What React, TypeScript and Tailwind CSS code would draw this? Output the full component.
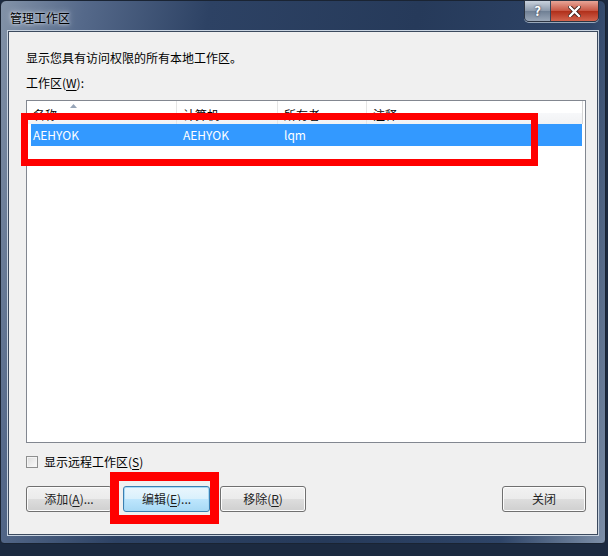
import { Fragment } from "react";

const font = { fontFamily: '"Noto Sans CJK SC", "Open Sans", sans-serif' };

const Btn = ({ label, focus, w }: { label: React.ReactNode; focus?: boolean; w: string }) => (
  <button
    className={`${w} h-[26px] rounded-[3px] border text-[12px] text-[#1e1e1e] leading-none ${
      focus
        ? "border-[#3c7fb1] shadow-[inset_0_0_0_1px_#a7d9f5] bg-[linear-gradient(#eaf6fd_0%,#d9f0fc_50%,#bee6fd_51%,#a7d9f5_100%)]"
        : "border-[#707070] shadow-[inset_0_0_0_1px_#fcfcfc] bg-[linear-gradient(#f2f2f2_0%,#ebebeb_50%,#dddddd_51%,#cfcfcf_100%)]"
    }`}
  >
    {label}
  </button>
);

const u = (c: string) => <span className="underline underline-offset-2">{c}</span>;

const columns = [
  { name: "名称", w: "w-[150px]" },
  { name: "计算机", w: "w-[101px]" },
  { name: "所有者", w: "w-[89px]" },
  { name: "注释", w: "flex-1" },
];

export default function App() {
  return (
    <div className="w-[608px] h-[556px] bg-[#1c2a40] overflow-hidden" style={font}>
      <div className="relative w-[606px] h-[544px] rounded-t-[6px] rounded-b-[4px] border border-[#1a2433] bg-[linear-gradient(100deg,#8393a8_0%,#55698a_12%,#2d4264_30%,#263a5a_60%,#2e4467_85%,#7d8fa8_100%)] px-[7px] pt-[30px] pb-[8px] flex flex-col">
        {/* title */}
        <div className="absolute left-[9px] top-[8px] text-[12px] text-black [text-shadow:0_0_6px_#dfe6ee,0_0_3px_#dfe6ee]">
          管理工作区
        </div>
        <div className="absolute right-[6px] top-[-1px] flex h-[22px] border border-[#2b3442] rounded-b-[5px] overflow-hidden shadow-[0_1px_0_#9aa8ba]">
          <div className="w-[26px] flex items-center justify-center bg-[linear-gradient(#c9d2dd,#8a98aa_50%,#6f7f94_51%,#9aa7b8)] text-white text-[13px] font-bold border-r border-[#39465a] [text-shadow:0_0_2px_#223]">
            ?
          </div>
          <div className="w-[47px] flex items-center justify-center bg-[linear-gradient(#e8a597,#c75441_50%,#b02f1a_51%,#d2644e)] text-white">
            <svg width="13" height="11" viewBox="0 0 13 11">
              <path d="M2 1 L11 10 M11 1 L2 10" stroke="#3b1a14" strokeWidth="4" strokeLinecap="square" />
              <path d="M2 1 L11 10 M11 1 L2 10" stroke="#fff" strokeWidth="2.4" strokeLinecap="square" />
            </svg>
          </div>
        </div>

        {/* client */}
        <div className="flex-1 bg-[#f0f0f0] border border-[#3c4a5e] shadow-[0_0_0_1px_#c8d3e0] flex flex-col pl-[17px] pr-[11px]">
          <div className="text-[12px] text-black mt-[18px] leading-[16px]">显示您具有访问权限的所有本地工作区。</div>
          <div className="text-[12px] text-black mt-[9px] leading-[16px]">工作区({u("W")}):</div>

          <div className="mt-[9px] h-[343px] border border-[#828790] bg-white flex flex-col">
            <div className="flex h-[23px] mr-[2px] text-[12px] text-black">
              {columns.map((c, i) => (
                <div
                  key={c.name}
                  className={`${c.w} relative flex items-center pt-[4px] pl-[6px] border-r border-[#e5e5e5] bg-[linear-gradient(#ffffff_0%,#ffffff_50%,#f7f8fa_51%,#f1f2f4_100%)] ${
                    i === 3 ? "border-r-[#d5d5d5]" : ""
                  }`}
                >
                  {c.name}
                  {i === 0 && (
                    <svg className="absolute left-[43px] top-[3px]" width="7" height="4" viewBox="0 0 7 4">
                      <path d="M0 4 L3.5 0 L7 4 Z" fill="#97a5b8" />
                    </svg>
                  )}
                </div>
              ))}
            </div>
            <div className="flex h-[22px] ml-[4px] mr-[3px] bg-[#3399ff] text-white text-[12px] items-center">
              {["AEHYOK", "AEHYOK", "lqm", ""].map((t, i) => (
                <Fragment key={i}>
                  <div className={`${i === 0 ? "w-[146px] pl-[2px]" : columns[i].w} ${i > 0 ? "pl-[6px]" : ""}`}>{t}</div>
                </Fragment>
              ))}
            </div>
          </div>

          <label className="flex items-center mt-[12px] h-[14px] text-[12px] text-black">
            <span className="w-[12px] h-[12px] border border-[#8e8f8f] bg-[linear-gradient(135deg,#dcdcdc,#fbfbfb)] shadow-[inset_0_0_0_1px_#f4f4f4]" />
            <span className="ml-[6px]">显示远程工作区({u("S")})</span>
          </label>

          <div className="flex mt-[17px] items-center">
            <Btn w="w-[86px]" label={<>添加({u("A")})...</>} />
            <div className="w-[11px]" />
            <Btn w="w-[87px]" focus label={<>编辑({u("E")})...</>} />
            <div className="w-[10px]" />
            <Btn w="w-[86px]" label={<>移除({u("R")})</>} />
            <div className="flex-1" />
            <Btn w="w-[84px]" label="关闭" />
          </div>
        </div>

        {/* annotation boxes */}
        <div className="absolute left-[20px] top-[112px] w-[517px] h-[53px] border-[7px] border-[#ff0000] pointer-events-none" />
        <div className="absolute left-[109px] top-[471px] w-[109px] h-[52px] border-[9px] border-[#ff0000] pointer-events-none" />
      </div>
    </div>
  );
}
